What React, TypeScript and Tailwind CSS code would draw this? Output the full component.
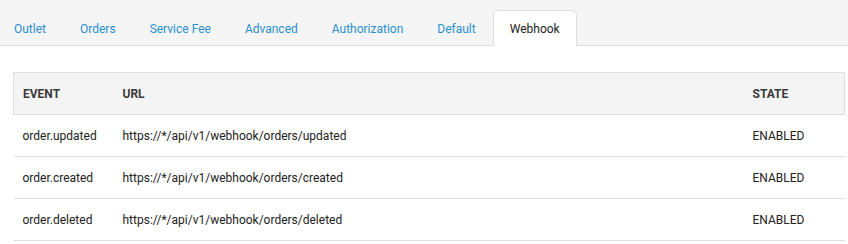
const tabs = ['Outlet', 'Orders', 'Service Fee', 'Advanced', 'Authorization', 'Default', 'Webhook'];

const hooks = [
  { event: 'order.updated', url: 'https://*/api/v1/webhook/orders/updated', state: 'ENABLED' },
  { event: 'order.created', url: 'https://*/api/v1/webhook/orders/created', state: 'ENABLED' },
  { event: 'order.deleted', url: 'https://*/api/v1/webhook/orders/deleted', state: 'ENABLED' },
];

export default function App() {
  return (
    <div className="h-[244px] w-[848px] overflow-hidden bg-white font-['Roboto',sans-serif] text-[12px]">
      {/* tabs */}
      <div className="flex h-[46px] items-end border-b border-[#dedede] bg-[#f5f5f5]">
        <ul className="-mb-px flex list-none">
          {tabs.map((t) => {
            const active = t === 'Webhook';
            return (
              <li key={t}>
                <span
                  className={
                    active
                      ? 'block h-[36px] rounded-t-[5px] border border-b-0 border-[#dedede] bg-white px-[16px] pt-[9px] text-[#222]'
                      : 'block h-[36px] border border-transparent px-[16px] pt-[9px] text-[#2a8fcf]'
                  }
                >
                  <span className={t === 'Outlet' ? '-ml-[3px]' : ''}>{t}</span>
                </span>
              </li>
            );
          })}
        </ul>
      </div>

      {/* table */}
      <div className="ml-[13px] mr-[3px] mt-[26px]">
        <table className="w-full border-collapse text-left">
          <thead>
            <tr className="h-[42px] border border-[#dedede] bg-[#f4f4f4] text-[12px] font-bold text-[#3a3a3a]">
              <th className="w-[100px] pl-[9px] font-bold">EVENT</th>
              <th className="pl-[9px] font-bold">URL</th>
              <th className="w-[101px] pl-[9px] font-bold">STATE</th>
            </tr>
          </thead>
          <tbody className="text-[#222]">
            {hooks.map((h) => (
              <tr key={h.event} className="h-[42px] border-b border-[#dedede]">
                <td className="pl-[9px]">{h.event}</td>
                <td className="pl-[9px]">{h.url}</td>
                <td className="pl-[9px]">{h.state}</td>
              </tr>
            ))}
          </tbody>
        </table>
      </div>
    </div>
  );
}
